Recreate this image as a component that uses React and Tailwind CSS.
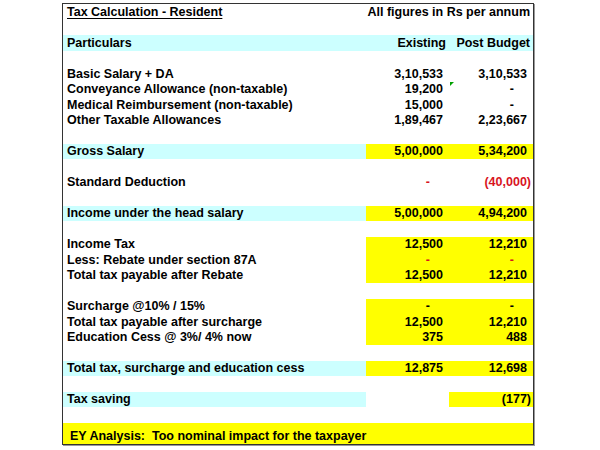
import React from "react";

const RED = "text-[#d8141e]";

function Val({ v, red, paren, dash, bg }) {
  let pr = "pr-[6px]";
  if (paren) pr = "pr-[2px]";
  if (dash) pr = "pr-[19px]";
  return (
    <div
      className={`flex h-full items-center justify-end ${pr} ${bg || ""} ${red ? RED : ""}`}
    >
      {v}
    </div>
  );
}

const E = { v: "" };

const rows = [
  { type: "title" },
  { type: "empty" },
  { type: "header" },
  { type: "empty" },
  { label: "Basic Salary + DA", a: { v: "3,10,533" }, b: { v: "3,10,533" } },
  { label: "Conveyance Allowance (non-taxable)", a: { v: "19,200" }, b: { v: "-", dash: true }, marker: true },
  { label: "Medical Reimbursement (non-taxable)", a: { v: "15,000" }, b: { v: "-", dash: true } },
  { label: "Other Taxable Allowances", a: { v: "1,89,467" }, b: { v: "2,23,667" } },
  { type: "empty" },
  { label: "Gross Salary", cyan: true, a: { v: "5,00,000", y: true }, b: { v: "5,34,200", y: true } },
  { type: "empty" },
  { label: "Standard Deduction", a: { v: "-", dash: true, red: true }, b: { v: "(40,000)", paren: true, red: true } },
  { type: "empty" },
  { label: "Income under the head salary", cyan: true, a: { v: "5,00,000", y: true }, b: { v: "4,94,200", y: true } },
  { type: "empty" },
  { label: "Income Tax", a: { v: "12,500", y: true }, b: { v: "12,210", y: true } },
  { label: "Less: Rebate under section 87A", a: { v: "-", dash: true, red: true, y: true }, b: { v: "-", dash: true, red: true, y: true } },
  { label: "Total tax payable after Rebate", a: { v: "12,500", y: true }, b: { v: "12,210", y: true } },
  { type: "empty" },
  { label: "Surcharge @10% / 15%", a: { v: "-", dash: true, y: true }, b: { v: "-", dash: true, y: true } },
  { label: "Total tax payable after surcharge", a: { v: "12,500", y: true }, b: { v: "12,210", y: true } },
  { label: "Education Cess @ 3%/ 4% now", a: { v: "375", y: true }, b: { v: "488", y: true } },
  { type: "empty" },
  { label: "Total tax, surcharge and education cess", cyan: true, a: { v: "12,875", y: true }, b: { v: "12,698", y: true } },
  { type: "empty" },
  { label: "Tax saving", cyan: true, a: E, b: { v: "(177)", paren: true, y: true } },
  { type: "empty" },
];

export default function App() {
  return (
    <div
      className="h-[450px] w-[600px] bg-white pt-[3px] text-black"
      style={{ fontFamily: '"Liberation Sans", Arial, sans-serif' }}
    >
      <div className="ml-[62px] w-[472px] border border-[#333] text-[12.5px] font-bold leading-none shadow-[1px_1px_0_#999]">
        {rows.map((r, i) => {
          if (r.type === "empty") return <div key={i} className="h-[15.5px]" />;
          if (r.type === "title")
            return (
              <div key={i} className="flex h-[15.5px] items-center justify-between pl-[4px] pr-[3px]">
                <span className="underline underline-offset-[2px]">Tax Calculation - Resident</span>
                <span>All figures in Rs per annum</span>
              </div>
            );
          if (r.type === "header")
            return (
              <div key={i} className="grid h-[15.5px] grid-cols-[303px_83px_84px] bg-[#ccffff]">
                <div className="flex items-center pl-[4px]">Particulars</div>
                <div className="flex items-center justify-end pr-[3px]">Existing</div>
                <div className="flex items-center justify-end pr-[3px]">Post Budget</div>
              </div>
            );
          return (
            <div key={i} className="grid h-[15.5px] grid-cols-[303px_83px_84px]">
              <div className={`flex items-center pl-[4px] ${r.cyan ? "bg-[#ccffff]" : ""}`}>{r.label}</div>
              <Val {...r.a} bg={r.a.y ? "bg-[#ffff00]" : ""} />
              <div className="relative">
                {r.marker && (
                  <div className="absolute left-[1px] top-[0px] h-0 w-0 border-r-[4px] border-t-[4px] border-r-transparent border-t-[#00a000]" />
                )}
                <Val {...r.b} bg={r.b.y ? "bg-[#ffff00]" : ""} />
              </div>
            </div>
          );
        })}
        <div className="flex h-[21px] items-end bg-[#ffff00] pb-[1px] pl-[7px]">
          EY Analysis:&nbsp; Too nominal impact for the taxpayer
        </div>
      </div>
    </div>
  );
}
